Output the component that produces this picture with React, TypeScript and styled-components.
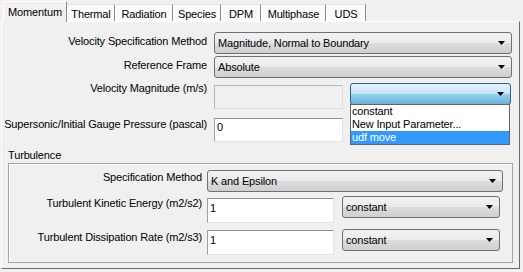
import React from "react";
import styled, {createGlobalStyle} from "styled-components";

const GlobalStyle = createGlobalStyle`
  html, body {
    margin: 0;
    padding: 0;
    background: #f0f0f0;
  }
  body {
    font-family: "Liberation Sans", Arial, sans-serif;
    font-size: 11px;
    letter-spacing: -0.15px;
    color: #000;
  }
  #root {
    width: 523px;
    height: 272px;
    overflow: hidden;
  }
`

const tabs = [
    {name: "Momentum", w: 64},
    {name: "Thermal", w: 48},
    {name: "Radiation", w: 58},
    {name: "Species", w: 48},
    {name: "DPM", w: 40},
    {name: "Multiphase", w: 65},
    {name: "UDS", w: 40},
];

const Arrow = () => (
    <ArrowIcon width="7" height="4" viewBox="0 0 7 4">
        <path d="M0 0H7L3.5 4Z" fill="#000"/>
    </ArrowIcon>
);

const ComboBox = ({width, value, open}: { width: number, value?: string, open?: boolean }) => (
    <Combo $w={width} $open={open}>
        <ComboText>{value}</ComboText>
        <Arrow/>
    </Combo>
);

export default function App() {
    return (
        <>
            <GlobalStyle/>
            <Window>
                <TabBar>
                    {tabs.map((t, i) => (
                        <Tab key={t.name} $w={t.w} $active={i === 0}>{t.name}</Tab>
                    ))}
                </TabBar>
                <Panel>
                    <Row $h={22}>
                        <FieldLabel $w={205} $gap={7} $mt={2}>Velocity Specification Method</FieldLabel>
                        <ComboBox width={298} value="Magnitude, Normal to Boundary"/>
                    </Row>
                    <Row $h={22} $mt={2}>
                        <FieldLabel $w={205} $gap={7} $mt={2}>Reference Frame</FieldLabel>
                        <ComboBox width={298} value="Absolute"/>
                    </Row>
                    <Row $h={26} $mt={5}>
                        <FieldLabel $w={205} $gap={7} $mt={-2}>Velocity Magnitude (m/s)</FieldLabel>
                        <TextBox $w={129} $h={24} $mt={2} disabled defaultValue=""/>
                        <DropWrap>
                            <ComboBox width={161} open/>
                            <DropList>
                                <DropItem>constant</DropItem>
                                <DropItem>New Input Parameter...</DropItem>
                                <DropItem $selected>udf move</DropItem>
                            </DropList>
                        </DropWrap>
                    </Row>
                    <Row $h={24} $mt={9}>
                        <FieldLabel $w={205} $gap={7} $mt={-1}>Supersonic/Initial Gauge Pressure (pascal)</FieldLabel>
                        <TextBox $w={129} $h={24} defaultValue="0"/>
                    </Row>
                    <SectionTitle>Turbulence</SectionTitle>
                    <GroupBox>
                        <Row $h={22}>
                            <FieldLabel $w={193} $gap={5}>Specification Method</FieldLabel>
                            <ComboBox width={296} value="K and Epsilon"/>
                        </Row>
                        <Row $h={27} $mt={4}>
                            <FieldLabel $w={193} $gap={5}>Turbulent Kinetic Energy (m2/s2)</FieldLabel>
                            <TextBox $w={127} $h={25} $mt={2} defaultValue="1"/>
                            <Spacer/>
                            <ComboBox width={158} value="constant"/>
                        </Row>
                        <Row $h={26} $mt={6}>
                            <FieldLabel $w={193} $gap={5} $mt={1}>Turbulent Dissipation Rate (m2/s3)</FieldLabel>
                            <TextBox $w={127} $h={25} $mt={1} defaultValue="1"/>
                            <Spacer/>
                            <ComboBox width={158} value="constant"/>
                        </Row>
                    </GroupBox>
                </Panel>
            </Window>
        </>
    );
}

const Window = styled.div`
  width: 523px;
  height: 272px;
  display: flex;
  flex-direction: column;
`

const TabBar = styled.div`
  display: flex;
  align-items: flex-end;
  height: 21px;
  padding-left: 3px;
  position: relative;
  z-index: 1;
`

const Tab = styled.div<{ $w: number, $active?: boolean }>`
  width: ${p => p.$w}px;
  height: ${p => p.$active ? 21 : 17}px;
  margin-bottom: ${p => p.$active ? -1 : 0}px;
  padding-top: ${p => p.$active ? 0 : 1}px;
  box-sizing: border-box;
  display: flex;
  align-items: center;
  justify-content: center;
  background: ${p => p.$active ? "#f0f0f0" : "#fafafa"};
  border-left: 1px solid #fff;
  border-right: 1px solid #8c8c8c;
  border-top: 1px solid ${p => p.$active ? "#fff" : "#e2e2e2"};
  white-space: nowrap;
`

const Panel = styled.div`
  margin-left: 1px;
  width: 519px;
  height: 248px;
  box-sizing: border-box;
  border: 1px solid;
  border-color: #fff #6a6a6a #6a6a6a #fff;
  padding: 10px 7px 0 0;
  display: flex;
  flex-direction: column;
`

const Row = styled.div<{ $h: number, $mt?: number }>`
  display: flex;
  align-items: flex-start;
  height: ${p => p.$h}px;
  margin-top: ${p => p.$mt ?? 0}px;
  flex-shrink: 0;
`

const FieldLabel = styled.div<{ $w: number, $gap: number, $mt?: number }>`
  width: ${p => p.$w}px;
  margin-right: ${p => p.$gap}px;
  margin-top: ${p => p.$mt ?? 0}px;
  flex-shrink: 0;
  text-align: right;
  line-height: 14px;
  white-space: nowrap;
`

const Combo = styled.div<{ $w: number, $open?: boolean }>`
  position: relative;
  width: ${p => p.$w}px;
  height: 22px;
  flex-shrink: 0;
  box-sizing: border-box;
  border: 1px solid ${p => p.$open ? "#2c628b" : "#707070"};
  border-radius: 3px;
  background: ${p => p.$open
    ? "linear-gradient(#e5f4fc 0%, #c4e5f6 50%, #98d1ef 50%, #68b3db 100%)"
    : "linear-gradient(#f2f2f2 0%, #ebebeb 50%, #dddddd 50%, #cfcfcf 100%)"};
  display: flex;
  align-items: center;
  padding: 0 6px 0 3px;
`

const ComboText = styled.span`
  flex: 1;
  line-height: 14px;
  white-space: nowrap;
  overflow: hidden;
`

const ArrowIcon = styled.svg`
  flex-shrink: 0;
  display: block;
`

const DropWrap = styled.div`
  position: relative;
  margin-left: 7px;
`

const DropList = styled.div`
  position: absolute;
  top: 21px;
  left: 0;
  width: 160px;
  box-sizing: border-box;
  border: 1px solid #646464;
  background: #fff;
  z-index: 5;
`

const DropItem = styled.div<{ $selected?: boolean }>`
  height: 13px;
  line-height: 13px;
  padding-left: 1px;
  white-space: nowrap;
  background: ${p => p.$selected ? "#3399ff" : "transparent"};
  color: ${p => p.$selected ? "#fff" : "#000"};
`

const TextBox = styled.input<{ $w: number, $h: number, $mt?: number }>`
  width: ${p => p.$w}px;
  height: ${p => p.$h}px;
  margin: ${p => p.$mt ?? 0}px 0 0 0;
  flex-shrink: 0;
  box-sizing: border-box;
  border: 1px solid;
  border-color: #8e8f8f #e3e3e3 #e3e3e3 #a0a0a0;
  background: #fff;
  font: inherit;
  letter-spacing: inherit;
  color: #000;
  padding: 1px 2px 7px 2px;
  outline: none;

  &:disabled {
    background: #f0f0f0;
    border-color: #b5b5b5 #dcdcdc #dcdcdc #b5b5b5;
  }
`

const Spacer = styled.div`
  width: 8px;
  flex-shrink: 0;
`

const SectionTitle = styled.div`
  margin: 6px 0 0 6px;
  line-height: 14px;
  height: 14px;
`

const GroupBox = styled.div`
  margin: 1px 0 0 6px;
  width: 505px;
  height: 100px;
  box-sizing: border-box;
  border: 1px solid #a6a6a6;
  box-shadow: inset 1px 1px 0 #fff;
  padding-top: 6px;
  display: flex;
  flex-direction: column;
`
